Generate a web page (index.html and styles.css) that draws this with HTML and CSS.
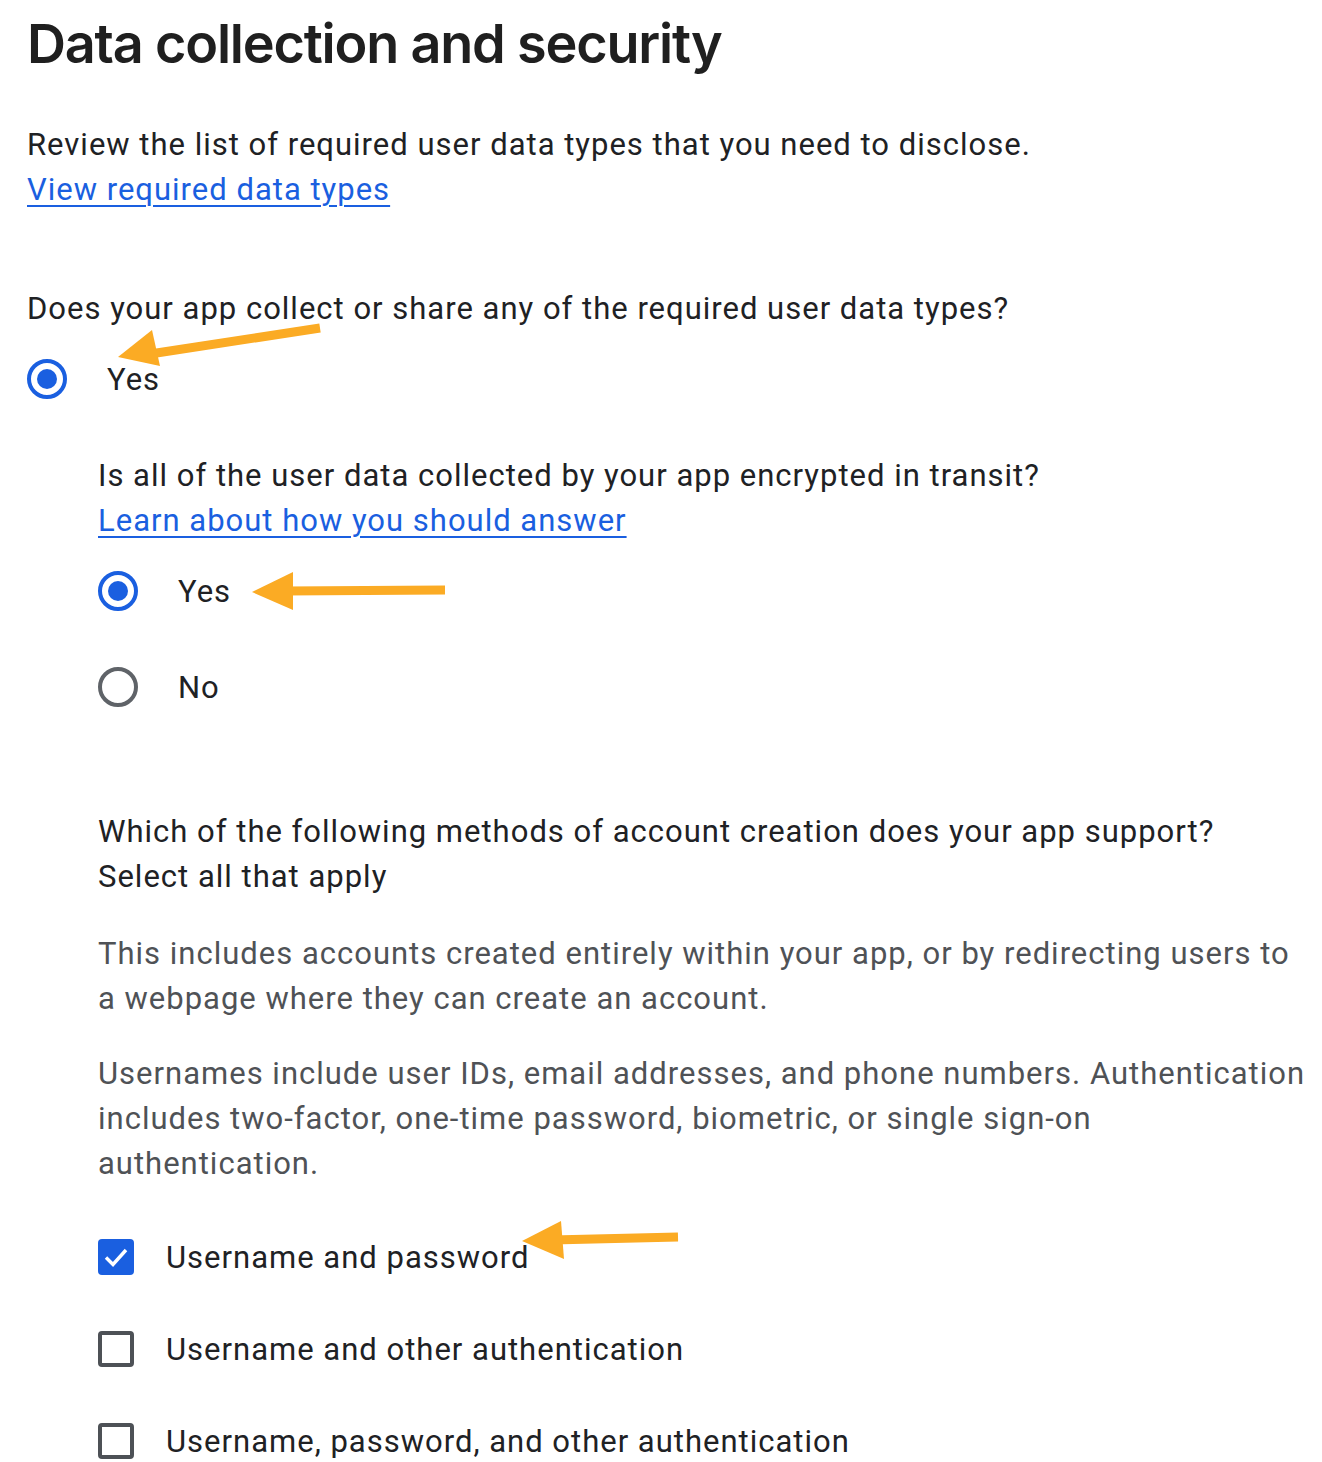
FILE: index.html
```html
<!DOCTYPE html>
<html>
<head>
<meta charset="utf-8">
<link rel="stylesheet" href="styles.css">
</head>
<body>
<div class="page">
  <h1 class="title">Data collection and security</h1>
  <div class="intro">
    <p class="text">Review the list of required user data types that you need to disclose.</p>
    <a class="link" href="#">View required data types</a>
  </div>

  <div class="q1">
    <p class="text">Does your app collect or share any of the required user data types?</p>
    <div class="radio-row first">
      <span class="radio checked"></span>
      <span class="label l1">Yes</span>
    </div>
  </div>

  <div class="nested">
    <div class="q2">
      <p class="text">Is all of the user data collected by your app encrypted in transit?</p>
      <a class="link" href="#">Learn about how you should answer</a>
      <div class="radio-list">
        <div class="radio-row">
          <span class="radio checked"></span>
          <span class="label">Yes</span>
        </div>
        <div class="radio-row">
          <span class="radio"></span>
          <span class="label">No</span>
        </div>
      </div>
    </div>

    <div class="q3">
      <p class="text">Which of the following methods of account creation does your app support?<br>Select all that apply</p>
      <p class="text muted">This includes accounts created entirely within your app, or by redirecting users to a webpage where they can create an account.</p>
      <p class="text muted second">Usernames include user IDs, email addresses, and phone numbers. Authentication includes two-factor, one-time password, biometric, or single sign-on authentication.</p>
      <div class="check-list">
        <div class="check-row">
          <span class="check checked">
            <svg viewBox="0 0 36 36" width="36" height="36"><path d="M8 18.5 L15 25.5 L28 11" fill="none" stroke="#fff" stroke-width="3.4"/></svg>
          </span>
          <span class="label">Username and password</span>
        </div>
        <div class="check-row">
          <span class="check"></span>
          <span class="label">Username and other authentication</span>
        </div>
        <div class="check-row">
          <span class="check"></span>
          <span class="label">Username, password, and other authentication</span>
        </div>
      </div>
    </div>
  </div>
</div>

<svg class="arrows" width="1322" height="1462" viewBox="0 0 1322 1462">
  <g fill="#fbab24" stroke="#fbab24">
    <line x1="320" y1="328" x2="150" y2="354" stroke-width="9"/>
    <polygon points="118,357 152,330 160,366" stroke="none"/>
    <line x1="445" y1="590" x2="285" y2="591" stroke-width="9"/>
    <polygon points="252,592 293,572 293,610" stroke="none"/>
    <line x1="678" y1="1237" x2="552" y2="1240" stroke-width="9"/>
    <polygon points="522,1241 561,1221 564,1259" stroke="none"/>
  </g>
</svg>
</body>
</html>
```
FILE: styles.css
```css
html, body {
  margin: 0;
  padding: 0;
  background: #ffffff;
}
body {
  position: relative;
  width: 1322px;
  height: 1462px;
  overflow: hidden;
  font-family: Roboto, "Liberation Sans", Arial, sans-serif;
  color: #202124;
}
.page {
  width: 1280px;
  padding: 12px 0 0 27px;
}
.title {
  margin: 0;
  font-family: Inter, Roboto, sans-serif;
  font-weight: 600;
  font-size: 54px;
  line-height: 64px;
  letter-spacing: -1.2px;
  color: #1f1f1f;
}
.text {
  margin: 0;
  font-size: 31px;
  line-height: 45px;
  letter-spacing: 1px;
  color: #202124;
}
.muted {
  color: #4f5256;
}
.link {
  display: inline-block;
  font-size: 31px;
  line-height: 45px;
  letter-spacing: 1px;
  color: #1a5fe0;
  text-decoration: underline;
  text-decoration-thickness: 2px;
  text-underline-offset: 5px;
}
.intro {
  margin-top: 46px;
}
.q1 {
  margin-top: 74px;
}
.radio-row {
  display: flex;
  align-items: center;
  height: 48px;
}
.radio-row.first {
  margin-top: 24px;
}
.radio {
  box-sizing: border-box;
  width: 40px;
  height: 40px;
  border-radius: 50%;
  border: 4px solid #5f6368;
  position: relative;
  flex: none;
}
.radio.checked {
  border-color: #1a5fe0;
}
.radio.checked::after {
  content: "";
  position: absolute;
  left: 6px;
  top: 6px;
  width: 20px;
  height: 20px;
  border-radius: 50%;
  background: #1a5fe0;
}
.label {
  font-size: 31px;
  letter-spacing: 1px;
  color: #202124;
  margin-left: 40px;
}
.nested {
  padding-left: 71px;
}
.q2 {
  margin-top: 50px;
}
.radio-list {
  display: flex;
  flex-direction: column;
  gap: 48px;
  margin-top: 24px;
}
.q3 {
  margin-top: 98px;
}
.q3 .muted {
  margin-top: 32px;
}
.q3 .muted.second {
  margin-top: 30px;
}
.check-list {
  display: flex;
  flex-direction: column;
  gap: 56px;
  margin-top: 53px;
}
.check-row {
  display: flex;
  align-items: center;
  height: 36px;
}
.check {
  box-sizing: border-box;
  width: 36px;
  height: 36px;
  border: 4px solid #4d5156;
  border-radius: 4px;
  flex: none;
  position: relative;
}
.check.checked {
  border: none;
  background: #1a5fe0;
}
.check svg {
  display: block;
}
.check-row .label {
  margin-left: 32px;
}
.arrows {
  position: absolute;
  left: 0;
  top: 0;
  pointer-events: none;
}
```
